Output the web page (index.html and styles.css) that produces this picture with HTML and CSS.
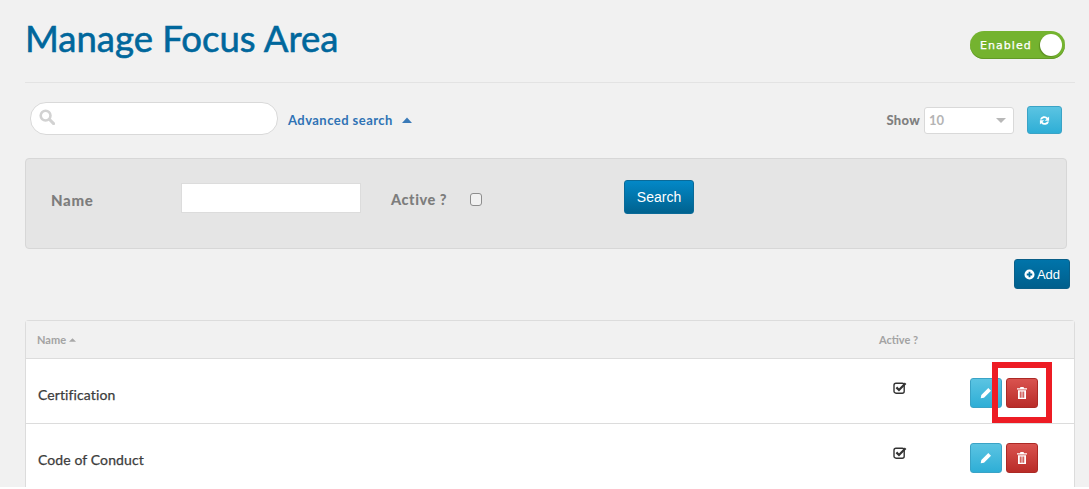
FILE: index.html
```html
<!DOCTYPE html>
<html lang="en">
<head>
<meta charset="utf-8">
<title>Manage Focus Area</title>
<link rel="stylesheet" href="styles.css">
</head>
<body>
<main class="page">
  <header class="head">
    <h1 class="title">Manage Focus Area</h1>
    <div class="toggle"><span class="toggle-label">Enabled</span><span class="knob"></span></div>
  </header>

  <section class="toolbar">
    <div class="searchbox">
      <svg class="mag" viewBox="0 0 16 16" width="16" height="16"><circle cx="6.6" cy="6.6" r="4.9" fill="none" stroke="#d2d2d2" stroke-width="2.6"/><path d="M10.3 10.3L14.6 14.6" stroke="#d2d2d2" stroke-width="3" stroke-linecap="round"/></svg>
    </div>
    <a class="adv">Advanced search</a>
    <svg class="adv-caret" viewBox="0 0 10 6" width="10" height="6"><path d="M0 6L5 0.5L10 6Z" fill="#3a7ab8"/></svg>
    <span class="spacer"></span>
    <span class="show">Show</span>
    <div class="select"><span>10</span><i class="select-caret"></i></div>
    <button class="btn refresh" aria-label="Refresh">
      <svg viewBox="0 0 12 12" width="11" height="11"><path d="M1 5A5 5 0 0 1 9.6 3L11 1.6V6.2H6.4L8.2 4.4A3 3 0 0 0 3.2 5ZM11 7A5 5 0 0 1 2.4 9L1 10.4V5.8H5.6L3.8 7.6A3 3 0 0 0 8.8 7Z" fill="#fff"/></svg>
    </button>
  </section>

  <section class="panel">
    <label class="field-name">Name</label>
    <div class="textinput"></div>
    <label class="field-active">Active ?</label>
    <span class="check"></span>
    <button class="btn search">Search</button>
  </section>

  <div class="addrow">
    <button class="btn add">
      <svg viewBox="0 0 12 12" width="11" height="11"><path fill-rule="evenodd" d="M6 .5a5.5 5.5 0 1 1 0 11a5.5 5.5 0 0 1 0-11ZM5 3v2H3v2h2v2h2V7h2V5H7V3Z" fill="#fff"/></svg>Add
    </button>
  </div>

  <section class="table">
    <div class="row row-head">
      <div class="col-name">Name<svg class="sort" viewBox="0 0 8 4" width="7" height="4"><path d="M0 4L4 0L8 4Z" fill="#a8a8a8"/></svg></div>
      <div class="col-active">Active ?</div>
      <div class="col-actions"></div>
    </div>
    <div class="row row-body">
      <div class="col-name">Certification</div>
      <div class="col-active">
        <svg class="tick" viewBox="0 0 14 14" width="14" height="14"><rect x="1" y="2.2" width="10.2" height="10" rx="2" fill="none" stroke="#333" stroke-width="1.4"/><path d="M3.4 6.4L6 9L12.6 2.2" fill="none" stroke="#333" stroke-width="2.2"/></svg>
      </div>
      <div class="col-actions">
        <button class="btn icon edit" aria-label="Edit"><svg viewBox="0 0 12 12" width="12" height="12"><path d="M8.3 1L11 3.7L4 10.7L.7 11.3L1.3 8Z" fill="#fff"/></svg></button>
        <button class="btn icon del" aria-label="Delete"><svg viewBox="0 0 10 12" width="10" height="12"><path d="M3.4 0H6.6L7 1.2H10V2.6H0V1.2H3ZM1 3.3H9V12H1ZM2.8 4.5V10.8H3.8V4.5ZM4.5 4.5V10.8H5.5V4.5ZM6.2 4.5V10.8H7.2V4.5Z" fill="#fff" fill-rule="evenodd"/></svg></button>
      </div>
    </div>
    <div class="row row-body">
      <div class="col-name">Code of Conduct</div>
      <div class="col-active">
        <svg class="tick" viewBox="0 0 14 14" width="14" height="14"><rect x="1" y="2.2" width="10.2" height="10" rx="2" fill="none" stroke="#333" stroke-width="1.4"/><path d="M3.4 6.4L6 9L12.6 2.2" fill="none" stroke="#333" stroke-width="2.2"/></svg>
      </div>
      <div class="col-actions">
        <button class="btn icon edit" aria-label="Edit"><svg viewBox="0 0 12 12" width="12" height="12"><path d="M8.3 1L11 3.7L4 10.7L.7 11.3L1.3 8Z" fill="#fff"/></svg></button>
        <button class="btn icon del" aria-label="Delete"><svg viewBox="0 0 10 12" width="10" height="12"><path d="M3.4 0H6.6L7 1.2H10V2.6H0V1.2H3ZM1 3.3H9V12H1ZM2.8 4.5V10.8H3.8V4.5ZM4.5 4.5V10.8H5.5V4.5ZM6.2 4.5V10.8H7.2V4.5Z" fill="#fff" fill-rule="evenodd"/></svg></button>
      </div>
    </div>
  </section>
</main>
<div class="callout"></div>
</body>
</html>
```
FILE: styles.css
```css
* { box-sizing: border-box; }
html { margin: 0; height: 489px; overflow: hidden; background: #fff; }
body { margin: 0; height: 487px; overflow: hidden; background: #f1f1f1; font-family: "Lato", "Liberation Sans", sans-serif; color: #333; position: relative; }
.page { padding-left: 25px; width: 1075px; }

.head { height: 83px; border-bottom: 1px solid #e3e3e3; display: flex; justify-content: space-between; align-items: flex-start; }
.title { margin: 16px 0 0; font-size: 36.5px; line-height: 45px; font-weight: 400; color: #00679c; -webkit-text-stroke: 0.6px #00679c; }
.toggle { margin: 31px 10px 0 0; width: 95px; height: 28px; border-radius: 14px; background: #74b32f; display: flex; align-items: center; justify-content: space-between; padding: 0 3px 0 10px; box-shadow: inset 0 -1px 0 #629a26; }
.toggle-label { color: #fff; font-family: "DejaVu Sans", sans-serif; font-size: 11px; font-weight: 400; letter-spacing: 1.05px; -webkit-text-stroke: .25px #fff; }
.knob { width: 22px; height: 22px; border-radius: 50%; background: #fff; box-shadow: -1px 1px 1px rgba(70, 110, 20, .5); }

.toolbar { height: 74px; padding-left: 5px; padding-right: 13px; display: flex; align-items: center; }
.searchbox { width: 248px; height: 33px; margin-top: -3px; background: #fff; border: 1px solid #d9d9d9; border-radius: 16px; padding: 7px 0 0 8px; }
.mag { display: block; margin-top: -1px; }
.adv { margin-left: 10px; margin-top: -1px; color: #2f73b5; font-size: 13px; font-weight: 700; letter-spacing: .45px; }
.adv-caret { margin-left: 9px; }
.spacer { flex: 1; }
.show { color: #7f7f7f; font-size: 13px; font-weight: 900; letter-spacing: .3px; margin-right: 4px; }
.select { width: 90px; height: 27px; background: #fff; border: 1px solid #d9d9d9; border-radius: 3px; display: flex; align-items: center; justify-content: space-between; padding: 0 7px 0 4px; color: #b4b4b4; font-size: 13px; font-weight: 700; }
.select-caret { width: 0; height: 0; border-left: 5px solid transparent; border-right: 5px solid transparent; border-top: 5px solid #b8b8b8; }

.btn { border: 1px solid transparent; padding: 0; color: #fff; font-family: "Liberation Sans", sans-serif; display: inline-flex; align-items: center; justify-content: center; border-radius: 3px; }
.refresh { margin-left: 13px; width: 35px; height: 28px; background: linear-gradient(#5bc4e2, #2eaed6); border-color: #3aa3c6; }

.panel { width: 1042px; height: 91px; background: #e5e5e5; border: 1px solid #d7d7d7; border-radius: 4px; margin-top: 1px; display: flex; align-items: flex-start; }
.field-name { margin: 32px 0 0 25px; width: 130px; color: #7d7d7d; font-size: 15px; font-weight: 900; letter-spacing: .65px; line-height: 18px; }
.textinput { margin-top: 24px; width: 180px; height: 30px; background: #fff; border: 1px solid #dcdcdc; }
.field-active { margin: 32px 0 0 30px; width: 56px; color: #7d7d7d; font-size: 14.5px; font-weight: 900; letter-spacing: .55px; line-height: 18px; white-space: nowrap; }
.check { margin: 34px 0 0 23px; width: 12px; height: 13px; background: #f1f1f1; border: 1px solid #8d8d8d; border-radius: 3px; }
.search { margin: 21px 0 0 142px; width: 70px; height: 34px; font-size: 14px; background: linear-gradient(#0388c7, #00628f); border-color: #0a6a98; }

.addrow { display: flex; justify-content: flex-end; padding-right: 5px; margin-top: 10px; height: 61px; }
.add { width: 56px; height: 30px; font-size: 13px; gap: 2px; background: linear-gradient(#0074aa, #005f8c); border-color: #0a5f88; }

.table { border: 1px solid #dcdcdc; border-bottom: 0; border-radius: 4px 4px 0 0; width: 1050px; margin-left: 0; }
.row { display: grid; grid-template-columns: 840px 80px 1fr; align-items: center; }
.row-head { height: 38px; background: #f1f1f1; border-bottom: 1px solid #dcdcdc; color: #a3a3a3; font-size: 11px; font-weight: 700; }
.row-head .col-name { padding-left: 11px; display: flex; align-items: center; gap: 3px; }
.row-head .col-active { padding-left: 13px; }
.row-body { height: 65px; background: #fff; border-bottom: 1px solid #dcdcdc; font-size: 14px; font-weight: 700; color: #3c3c3c; }
.row-body .col-name { padding: 6px 0 0 12px; font-weight: 400; letter-spacing: .1px; -webkit-text-stroke: .25px #3c3c3c; }
.row-body .col-active { padding: 0 0 7px 27px; display: flex; align-items: center; }
.tick { display: block; }
.col-actions { display: flex; gap: 4px; padding: 4px 0 0 24px; }
.icon { width: 32px; height: 30px; }
.edit { background: linear-gradient(#5bc4e2, #2eaed6); border-color: #3aa3c6; }
.del { background: linear-gradient(#d9534f, #b92c28); border-color: #ac2925; }

.callout { position: absolute; left: 992px; top: 362px; width: 60px; height: 61px; border: 6px solid #ed1c24; }
```
